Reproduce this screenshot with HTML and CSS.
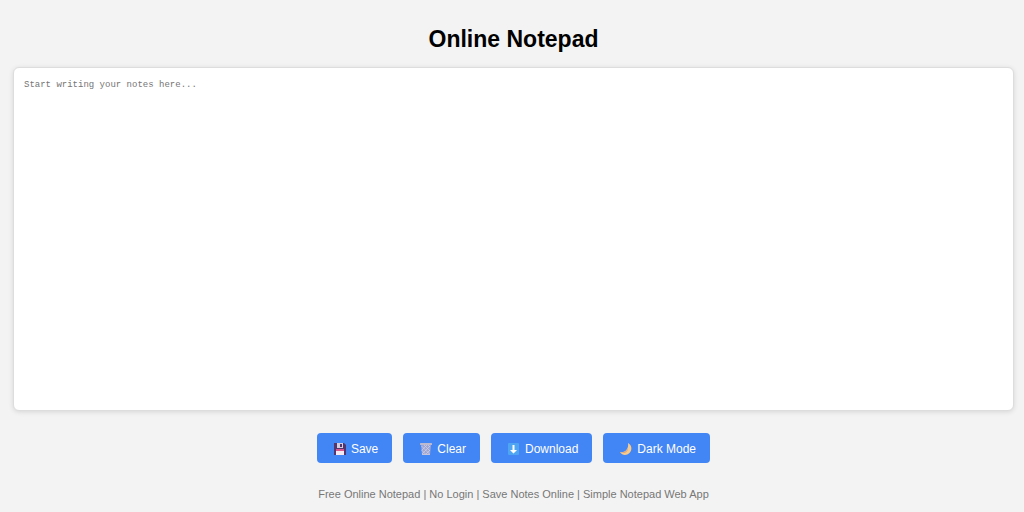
FILE: index.html
```html
<!DOCTYPE html>
<html lang="en">
<head>
  <meta charset="UTF-8">
  <meta name="viewport" content="width=device-width, initial-scale=1">
  <title>Online Notepad</title>
  <link rel="stylesheet" href="styles.css">
</head>
<body>

  <h1>Online Notepad</h1>

  <textarea id="notepad" aria-label="Notes" placeholder="Start writing your notes here..."></textarea>

  <div class="buttons">
    <button type="button" onclick="saveNote()">
      <svg class="icon" viewBox="0 0 16 16" aria-hidden="true">
        <path d="M3 2h10l2 2v10H3z" fill="#51356f"/>
        <path d="M6 2h6v5H6z" fill="#d5cede"/>
        <path d="M9 3h2v3H9z" fill="#51356f"/>
        <path d="M5 9h8v5H5z" fill="#f3eaf3"/>
        <path d="M5 8h8v2H5z" fill="#d9578f"/>
      </svg>
      Save
    </button>
    <button type="button" onclick="clearNote()">
      <svg class="icon" viewBox="0 0 16 16" aria-hidden="true">
        <path d="M4 4h10l-1 10H5z" fill="#9da4d6"/>
        <path d="M4.500 5l8 8M7 4l6 6M11 4l2 2M4.500 9l4 4M13 5l-8 8M10 4l-5 5M13 9l-4 4" stroke="#cfcde0" stroke-width=".8" fill="none"/>
        <path d="M5 13.500h8" stroke="#c5c3dc"/>
        <rect x="3" y="2" width="12" height="2" rx=".5" fill="#bdb9cf"/>
      </svg>
      Clear
    </button>
    <button type="button" onclick="downloadNote()">
      <svg class="icon" viewBox="0 0 16 16" aria-hidden="true">
        <rect x="3" y="2" width="11" height="12" rx="1" fill="#4ea6f3"/>
        <path d="M7.500 4h2v5H12l-3.500 3.500L5 9h2.500z" fill="#fff"/>
      </svg>
      Download
    </button>
    <button type="button" onclick="toggleDarkMode()">
      <svg class="icon" viewBox="0 0 16 16" aria-hidden="true">
        <path d="M11 2C15 4 15.500 9 12.500 12 9.500 15 5 14.500 3 11c5 1 9-3 8-9z" fill="#f7cb8b"/>
        <path d="M3 11c4 1 7-1 8-4C11.500 11 7 13.500 3 11z" fill="#dfa77d"/>
      </svg>
      Dark Mode
    </button>
  </div>

  <footer>Free Online Notepad | No Login | Save Notes Online | Simple Notepad Web App</footer>

  <script src="script.js"></script>
</body>
</html>
```
FILE: styles.css
```css
* {
  box-sizing: border-box;
}
body {
  display: flex;
  flex-direction: column;
  min-height: 100vh;
  margin: 0;
  padding: 24px 10px 9px 13px;
  background: #f3f3f3;
  font-family: Arial, "Liberation Sans", sans-serif;
  text-align: center;
}
h1 {
  margin: 0 0 13px;
  color: #000;
  font-size: 23px;
  line-height: 30px;
}
textarea {
  display: block;
  flex: 1;
  width: 100%;
  min-height: 200px;
  padding: 11px 10px;
  border: 1px solid #ddd;
  border-radius: 6px;
  outline: none;
  resize: none;
  background: #fff;
  color: #222;
  box-shadow: 0 1px 5px rgba(0,0,0,0.12);
  font-family: Consolas, "Liberation Mono", monospace;
  font-size: 9px;
  line-height: 12px;
}
textarea::placeholder {
  color: #757575;
}
.buttons {
  display: flex;
  flex-wrap: wrap;
  justify-content: center;
  gap: 11px;
  margin-top: 22px;
}
button {
  display: flex;
  align-items: center;
  gap: 4px;
  height: 30px;
  padding: 1px 14px 0;
  border: none;
  border-radius: 4px;
  background: #4285f4;
  color: #fff;
  font-family: inherit;
  font-size: 12px;
  cursor: pointer;
}
button:hover {
  background: #3367d6;
}
.icon {
  width: 16px;
  height: 16px;
}
footer {
  margin-top: 23px;
  color: #777;
  font-size: 11px;
  line-height: 17px;
}
body.dark {
  background: #222;
}
body.dark h1 {
  color: #fff;
}
body.dark textarea {
  background: #333;
  color: #fff;
}
```
FILE: script.js
```js
const notepad = document.getElementById('notepad');

try {
  notepad.value = localStorage.getItem('note') || '';
} catch (e) {
  // storage is not available
}

function saveNote() {
  localStorage.setItem('note', notepad.value);
}

function clearNote() {
  notepad.value = '';
  localStorage.removeItem('note');
}

function downloadNote() {
  const link = document.createElement('a');
  link.href = URL.createObjectURL(new Blob([notepad.value], { type: 'text/plain' }));
  link.download = 'note.txt';
  link.click();
}

function toggleDarkMode() {
  document.body.classList.toggle('dark');
}
```
